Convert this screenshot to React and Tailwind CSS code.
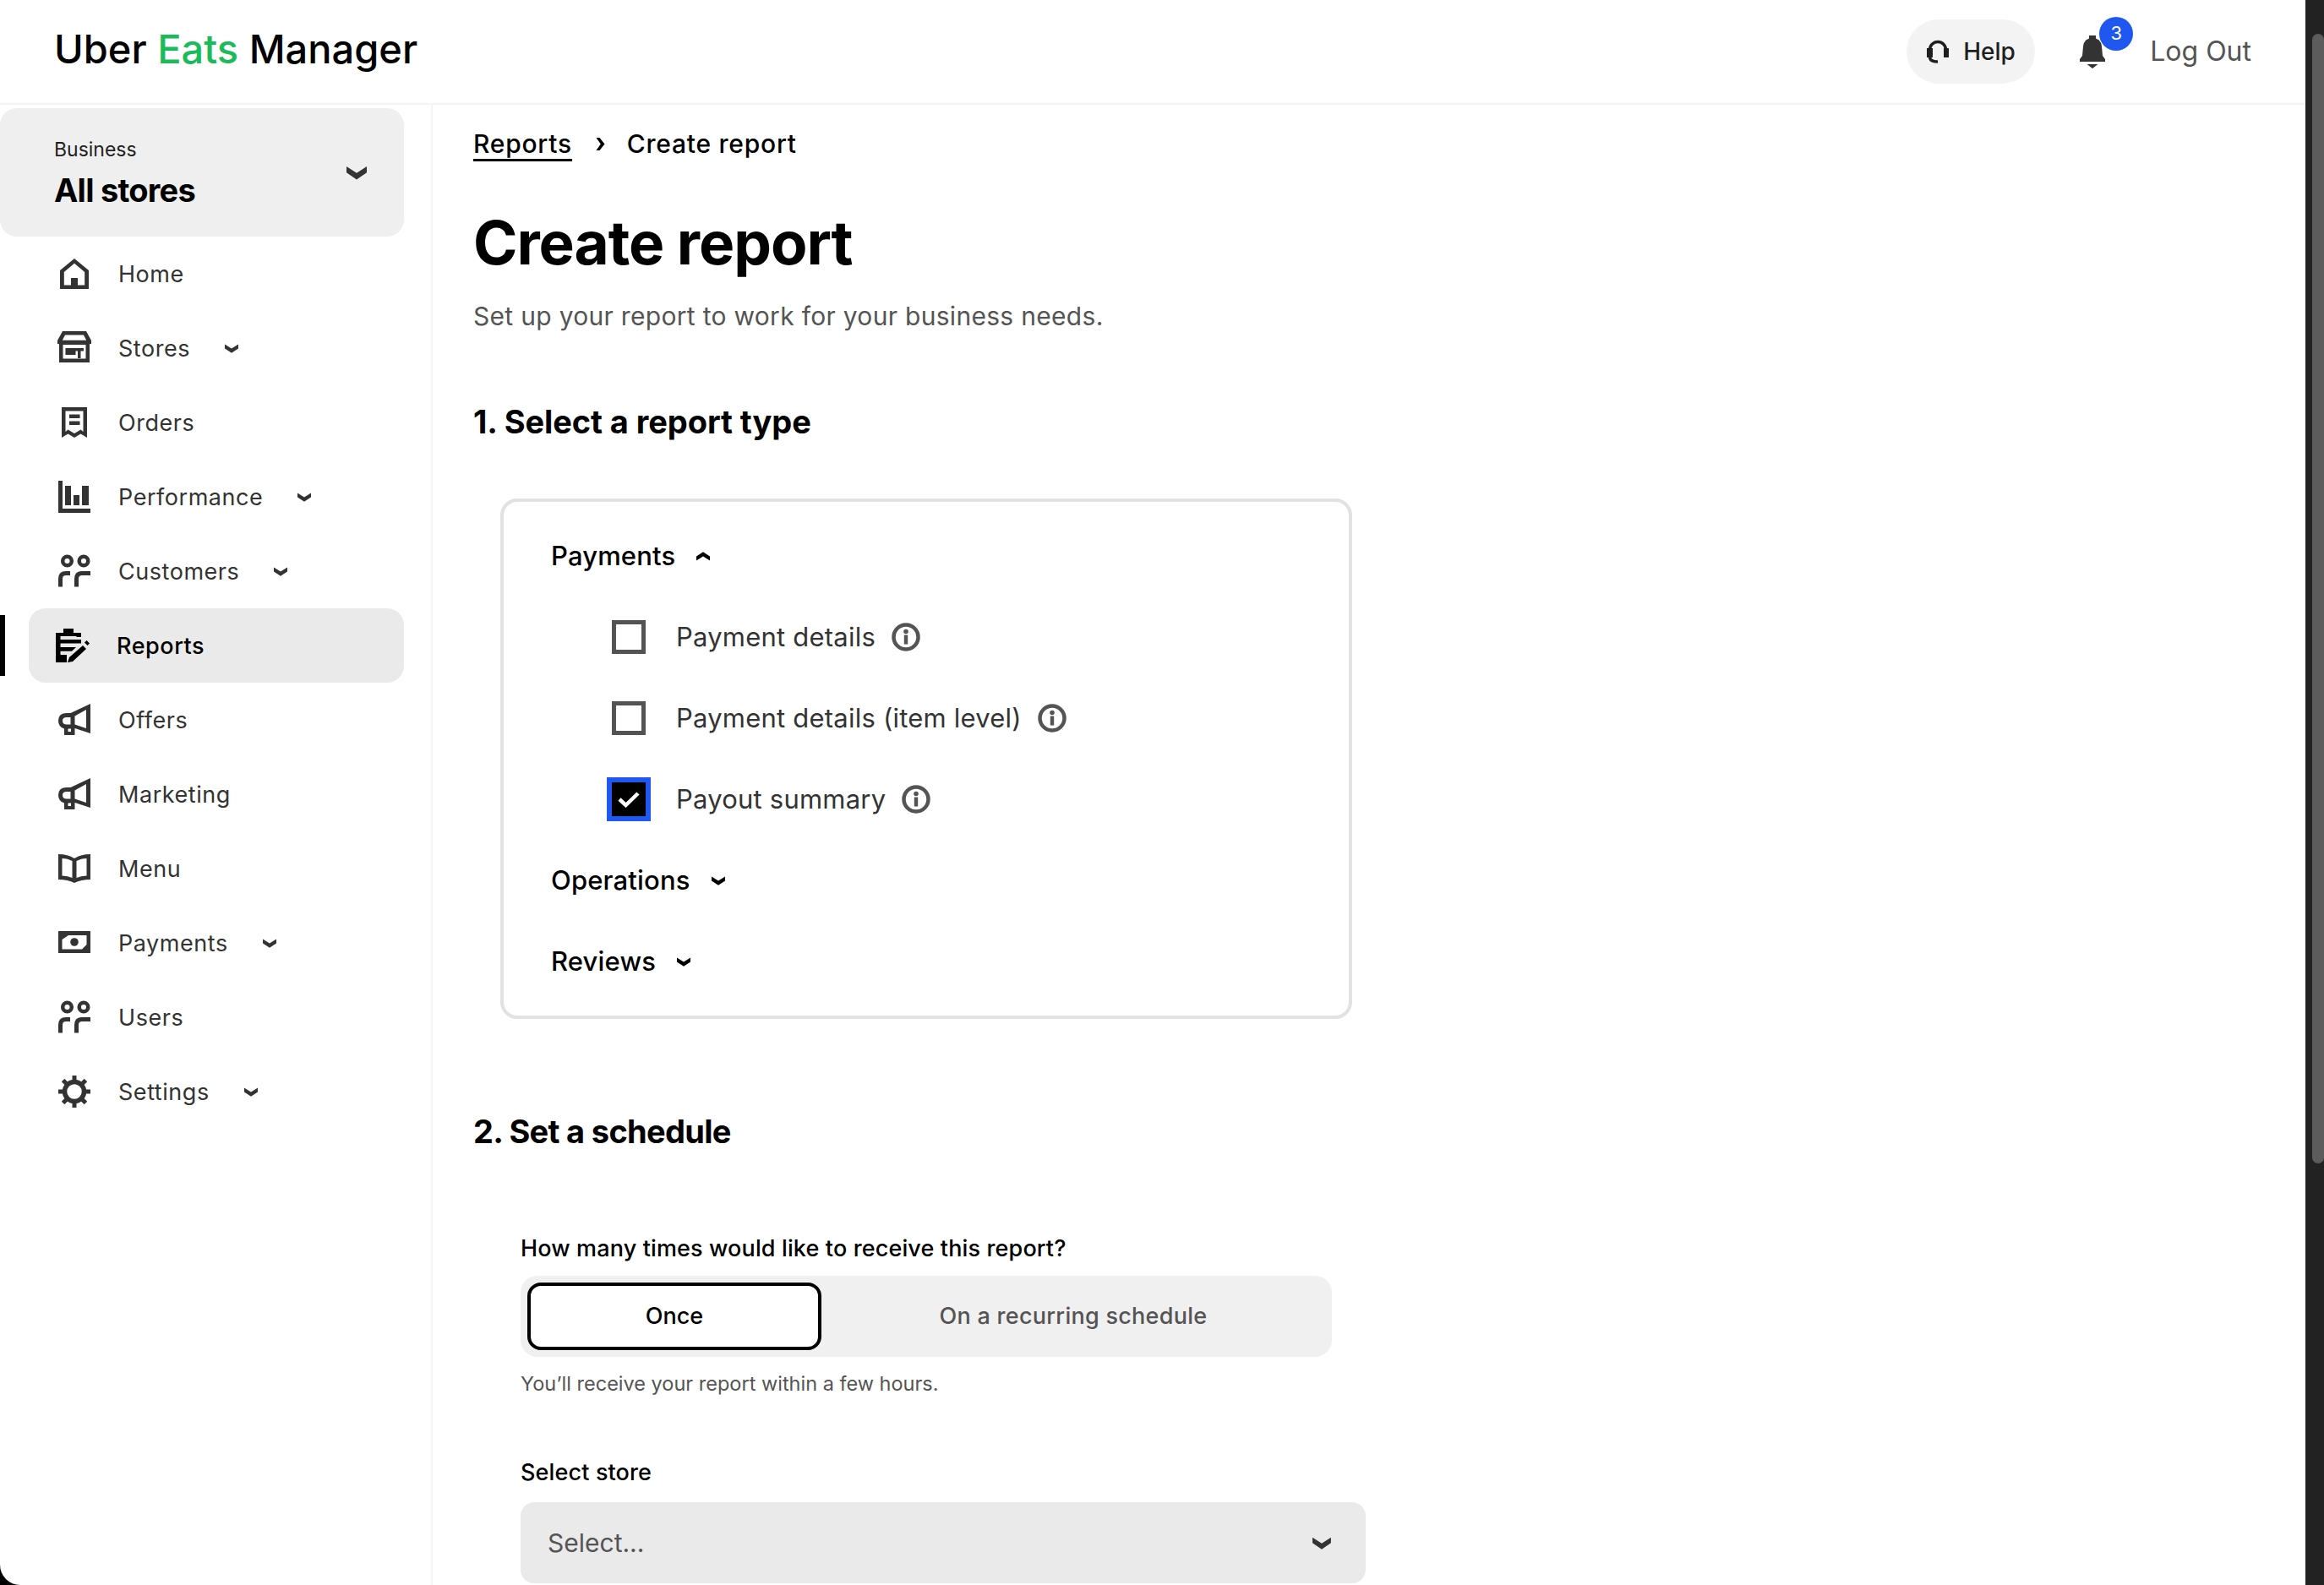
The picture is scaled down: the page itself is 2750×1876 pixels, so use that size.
import React from 'react';

const Chevron = ({ className = 'w-4 h-[11px]', up = false, fill = '#333333' }) => (
  <svg viewBox="0 0 16 11" className={className} style={up ? { transform: 'rotate(180deg)' } : undefined}>
    <path d="M0 0.5 L8 5.6 L16 0.5 V5.4 L8 10.8 L0 5.4Z" fill={fill} />
  </svg>
);

const HomeIcon = () => (
  <svg viewBox="0 0 40 40" className="w-10 h-10 shrink-0" fill="#333333">
    <path fillRule="evenodd" d="M20 2 L37 16 V38 H3 V16 Z M20 7.8 L7.8 18 V33.4 H32.2 V18 Z" />
    <rect x="16" y="25" width="8" height="10" />
  </svg>
);

const StoreIcon = () => (
  <svg viewBox="0 0 40 40" className="w-10 h-10 shrink-0" fill="#333333">
    <path fillRule="evenodd" d="M6 0 H34 L40 11 V15 H0 V11 Z M9 4.5 L5.8 10.8 H34.2 L31 4.5 Z" />
    <path fillRule="evenodd" d="M2 14 H38 V37 H2 Z M6.5 16 V32.5 H33.5 V16 Z" />
    <path d="M9.5 20 H31 V23.5 H27.5 V32 H24 V23.5 H21.5 V28 H9.5 Z" />
  </svg>
);

const OrdersIcon = () => (
  <svg viewBox="0 0 40 40" className="w-10 h-10 shrink-0" fill="#333333">
    <path fillRule="evenodd" d="M5 2 H35 V38 L27.5 33.5 L20 38 L12.5 33.5 L5 38 Z M9.5 6.5 V31 L12.5 28.6 L20 33 L27.5 28.6 L30.5 31 V6.5 Z" />
    <rect x="14" y="10.5" width="12.5" height="4.5" />
    <rect x="14" y="18.5" width="12.5" height="4.5" />
  </svg>
);

const ChartIcon = () => (
  <svg viewBox="0 0 40 40" className="w-10 h-10 shrink-0" fill="#333333">
    <path d="M1 1 H6 V34 H39 V39 H1 Z" />
    <rect x="9" y="7" width="7" height="23" />
    <rect x="19" y="18" width="7" height="12" />
    <rect x="29" y="7" width="8" height="23" />
  </svg>
);

const PeopleIcon = () => (
  <svg viewBox="0 0 40 40" className="w-10 h-10 shrink-0" fill="none" stroke="#333333">
    <circle cx="11.5" cy="8" r="5.3" strokeWidth="4.5" />
    <circle cx="31" cy="8" r="5.3" strokeWidth="4.5" />
    <path d="M3.5 38.5 V29 Q3.5 22.5 10 22.5 H15" strokeWidth="5" />
    <path d="M22.5 38.5 V29 Q22.5 22.5 29 22.5 H39" strokeWidth="5" />
  </svg>
);

const ReportsIcon = () => (
  <svg viewBox="0 0 40 40" className="w-10 h-10 shrink-0" fill="#000000">
    <rect x="9" y="0" width="12" height="9" />
    <path d="M0 5 H30 V10 H24.5 V9 H5.5 V13 H30 V17.5 H5.5 V22 H24 L19 26.8 H5.5 V31 H13 V40 H0 Z" />
    <path d="M14 40 L16 34 L32 20 L36 24 L20 39 Z" />
    <path d="M36.5 14 L40 17.5 L37.5 20 L34 16.5 Z" />
  </svg>
);

const MegaphoneIcon = () => (
  <svg viewBox="0 0 40 40" className="w-10 h-10 shrink-0" fill="#333333">
    <path fillRule="evenodd" d="M39 1 V36 L20.5 30 V38 H8 V30.5 Q1 28.5 1 21 Q1 12 11 12 H15.5 Z M34 8 L20.5 15.5 V25.5 L34 30 Z M15.5 17 H11 Q6 17 6 21 Q6 25.5 11 25.5 H15.5 Z M12.5 30.5 V34 H16 V30.5 Z" />
  </svg>
);

const MenuIcon = () => (
  <svg viewBox="0 0 40 40" className="w-10 h-10 shrink-0" fill="#333333">
    <path fillRule="evenodd" d="M1 3 Q12 3 20 8 Q28 3 39 3 V33 Q28 33 20 37 Q12 33 1 33 Z M5.5 8 V28.5 Q12 28.5 17.5 31 V11 Q12 8 5.5 8 Z M34.5 8 Q28 8 22.5 11 V31 Q28 28.5 34.5 28.5 Z" />
  </svg>
);

const CashIcon = () => (
  <svg viewBox="0 0 40 40" className="w-10 h-10 shrink-0" fill="#333333">
    <path fillRule="evenodd" d="M1 6 H39 V32 H1 Z M13 11 L5.5 16 V27.5 H29 L34.5 22 V11 Z" />
    <circle cx="20" cy="19" r="4.8" />
  </svg>
);

const GearIcon = () => (
  <svg viewBox="0 0 40 40" className="w-10 h-10 shrink-0" fill="#333333">
    <circle cx="20" cy="20" r="11.5" fill="none" stroke="#333333" strokeWidth="5.5" />
    {[0, 45, 90, 135, 180, 225, 270, 315].map((a) => (
      <rect key={a} x="17.5" y="1" width="5" height="8" transform={`rotate(${a} 20 20)`} />
    ))}
  </svg>
);

const InfoIcon = () => (
  <svg viewBox="0 0 34 34" className="w-[34px] h-[34px] shrink-0">
    <circle cx="17" cy="17" r="14.5" fill="none" stroke="#545454" strokeWidth="4.5" />
    <circle cx="17" cy="10.5" r="2.8" fill="#545454" />
    <rect x="14.8" y="14.5" width="4.4" height="11" fill="#545454" />
  </svg>
);

const HeadsetIcon = () => (
  <svg viewBox="0 0 26 28" className="w-[26px] h-7 shrink-0" fill="none" stroke="#1f1f1f">
    <path d="M3.5 15 V12 A9.5 9.5 0 0 1 22.5 12 V15" strokeWidth="3.5" />
    <rect x="0" y="10" width="7" height="11" fill="#1f1f1f" stroke="none" />
    <rect x="20" y="10" width="6" height="11" fill="#1f1f1f" stroke="none" />
    <path d="M3.5 21 Q4 26 13 26" strokeWidth="3.5" />
  </svg>
);

const BellIcon = () => (
  <svg viewBox="0 0 30 39" className="w-[30px] h-[39px]" fill="#333333">
    <rect x="11" y="0" width="8" height="5" />
    <path d="M15 3 Q5 3 4 13 L3 24 L0 28 V31 H30 V28 L27 24 L26 13 Q25 3 15 3 Z" />
    <path d="M8.5 34 H21.5 L15 39 Z" />
  </svg>
);

const navItems = [
  { label: 'Home', icon: HomeIcon },
  { label: 'Stores', icon: StoreIcon, caret: true },
  { label: 'Orders', icon: OrdersIcon },
  { label: 'Performance', icon: ChartIcon, caret: true },
  { label: 'Customers', icon: PeopleIcon, caret: true },
  { label: 'Reports', icon: ReportsIcon, active: true },
  { label: 'Offers', icon: MegaphoneIcon },
  { label: 'Marketing', icon: MegaphoneIcon },
  { label: 'Menu', icon: MenuIcon },
  { label: 'Payments', icon: CashIcon, caret: true },
  { label: 'Users', icon: PeopleIcon },
  { label: 'Settings', icon: GearIcon, caret: true },
];

const Section = ({ label, up }) => (
  <div className="h-24 flex items-center pl-[56px] gap-[25px] text-[31px] font-medium text-black tracking-[0.005em]">
    <span>{label}</span>
    <Chevron up={up} fill="#000000" />
  </div>
);

const CheckRow = ({ label, checked }) => (
  <div className="h-24 flex items-center pl-[128px]">
    {checked ? (
      <div className="w-10 h-10 shrink-0 bg-black outline-[6px] outline-solid outline-[#1f57f0] flex items-center justify-center">
        <svg viewBox="0 0 26 20" className="w-[26px] h-5">
          <path d="M2 10 L9.5 17 L24 3" fill="none" stroke="#ffffff" strokeWidth="4.5" />
        </svg>
      </div>
    ) : (
      <div className="w-10 h-10 shrink-0 border-[5px] border-[#545454]" />
    )}
    <span className="ml-[36px] mr-[19px] text-[31px] text-[#333333] tracking-[0.007em]">{label}</span>
    <InfoIcon />
  </div>
);

export default function App() {
  return (
    <div className="w-[2750px] h-[1876px] overflow-hidden flex bg-black font-['Inter',sans-serif]">
      <div className="flex-1 min-w-0 h-full bg-white rounded-bl-[24px] overflow-hidden flex flex-col">
        <header className="h-[124px] shrink-0 border-b-2 border-[#f3f3f3] flex items-center pl-[64px] pr-[64px]">
          <div className="text-[47px] font-medium tracking-normal text-black leading-none mb-[7px]">
            Uber <span className="text-[#1cbb5a]">Eats</span> Manager
          </div>
          <div className="ml-auto flex items-center">
            <button className="h-[76px] w-[152px] rounded-full bg-[#f3f3f3] flex items-center pl-[24px] gap-[17px] text-[28px] font-medium text-[#1f1f1f]">
              <HeadsetIcon />
              Help
            </button>
            <div className="relative ml-[53px] w-[30px] h-[39px]">
              <BellIcon />
              <div className="absolute -top-[22px] left-[23px] w-10 h-10 rounded-full bg-[#1f57f0] text-white text-[22px] flex items-center justify-center">3</div>
            </div>
            <span className="ml-[53px] text-[32px] text-[#545454]">Log Out</span>
          </div>
        </header>

        <div className="flex-1 min-h-0 flex">
          <aside className="w-[512px] shrink-0 border-r-2 border-[#f3f3f3] pt-1">
            <div className="w-[478px] h-[152px] rounded-[20px] bg-[#efefef] flex items-center justify-between pl-[64px] pr-[44px]">
              <div className="flex flex-col">
                <span className="text-[23px] leading-[32px] text-[#1f1f1f]">Business</span>
                <span className="text-[38px] leading-[46px] font-bold tracking-[-0.02em] text-black mt-[9px]">All stores</span>
              </div>
              <Chevron className="w-6 h-[17px]" />
            </div>
            <nav className="pl-[34px] w-[478px] flex flex-col">
              {navItems.map((item) => {
                const Icon = item.icon;
                return (
                  <div
                    key={item.label}
                    className={
                      item.active
                        ? 'relative h-[88px] rounded-[20px] bg-[#eaeaea] flex items-center pl-[32px] gap-[33px] text-black font-medium'
                        : 'relative h-[88px] rounded-[20px] flex items-center pl-[34px] gap-[33px] text-[#333333]'
                    }
                  >
                    {item.active && <div className="absolute -left-[34px] top-2 w-[6px] h-[72px] bg-black" />}
                    <Icon />
                    <span className="text-[27px] tracking-[0.02em] -ml-[1px] mt-[2px]">{item.label}</span>
                    {item.caret && <Chevron className="w-4 h-[11px] ml-[8px]" />}
                  </div>
                );
              })}
            </nav>
          </aside>

          <main className="flex-1 min-w-0 pl-[48px] pt-[24px]">
            <div className="h-11 flex items-center text-[30px] tracking-[0.025em] text-black font-medium">
              <span className="relative">
                Reports
                <span className="absolute left-0 right-0 top-[40px] h-[3px] bg-black" />
              </span>
              <svg viewBox="0 0 11 15" className="w-[11px] h-[15px] ml-[28px] mr-[26px]">
                <path d="M0.5 0 L4.5 0 L10.5 7.5 L4.5 15 L0.5 15 L5.8 7.5 Z" fill="#000000" />
              </svg>
              <span>Create report</span>
            </div>

            <h1 className="mt-[55px] text-[71px] leading-[80px] font-bold tracking-[-0.015em] text-black">Create report</h1>
            <p className="mt-[27px] text-[30px] leading-10 tracking-[0.01em] text-[#545454]">Set up your report to work for your business needs.</p>

            <h2 className="mt-[81px] text-[38px] leading-[48px] font-bold tracking-[-0.002em] text-black">1. Select a report type</h2>

            <div className="mt-[67px] ml-[32px] w-[1008px] h-[616px] rounded-[20px] border-4 border-[#e2e2e2] py-4">
              <Section label="Payments" up />
              <CheckRow label="Payment details" />
              <CheckRow label="Payment details (item level)" />
              <CheckRow label="Payout summary" checked />
              <Section label="Operations" />
              <Section label="Reviews" />
            </div>

            <h2 className="mt-[109px] text-[38px] leading-[48px] font-bold tracking-[-0.018em] text-black">2. Set a schedule</h2>

            <div className="ml-[56px]">
              <div className="mt-[97px] text-[27px] leading-9 font-medium tracking-[0.005em] text-black">How many times would like to receive this report?</div>
              <div className="mt-[14px] w-[960px] h-24 rounded-[20px] bg-[#f0f0f0] p-2 flex">
                <div className="w-[348px] rounded-2xl border-4 border-black bg-white flex items-center justify-center text-[27px] font-medium text-black">Once</div>
                <div className="flex-1 flex items-center justify-center text-[27px] font-medium tracking-[0.01em] text-[#545454]">On a recurring schedule</div>
              </div>
              <div className="mt-4 text-[23.5px] leading-8 text-[#545454]">You’ll receive your report within a few hours.</div>
              <div className="mt-[71px] text-[27px] leading-9 font-medium tracking-[0.005em] text-black">Select store</div>
              <div className="mt-[17px] w-[1000px] h-[96px] rounded-2xl bg-[#eaeaea] flex items-center justify-between pl-8 pr-[41px]">
                <span className="text-[30px] text-[#545454]">Select...</span>
                <Chevron className="w-[22px] h-[15px]" />
              </div>
            </div>
          </main>
        </div>
      </div>

      <div className="w-[22px] shrink-0 h-full bg-[#222222] pl-2 pt-10">
        <div className="w-full h-[1337px] rounded-t-full rounded-b-full bg-[#5c5c5c]" />
      </div>
    </div>
  );
}
